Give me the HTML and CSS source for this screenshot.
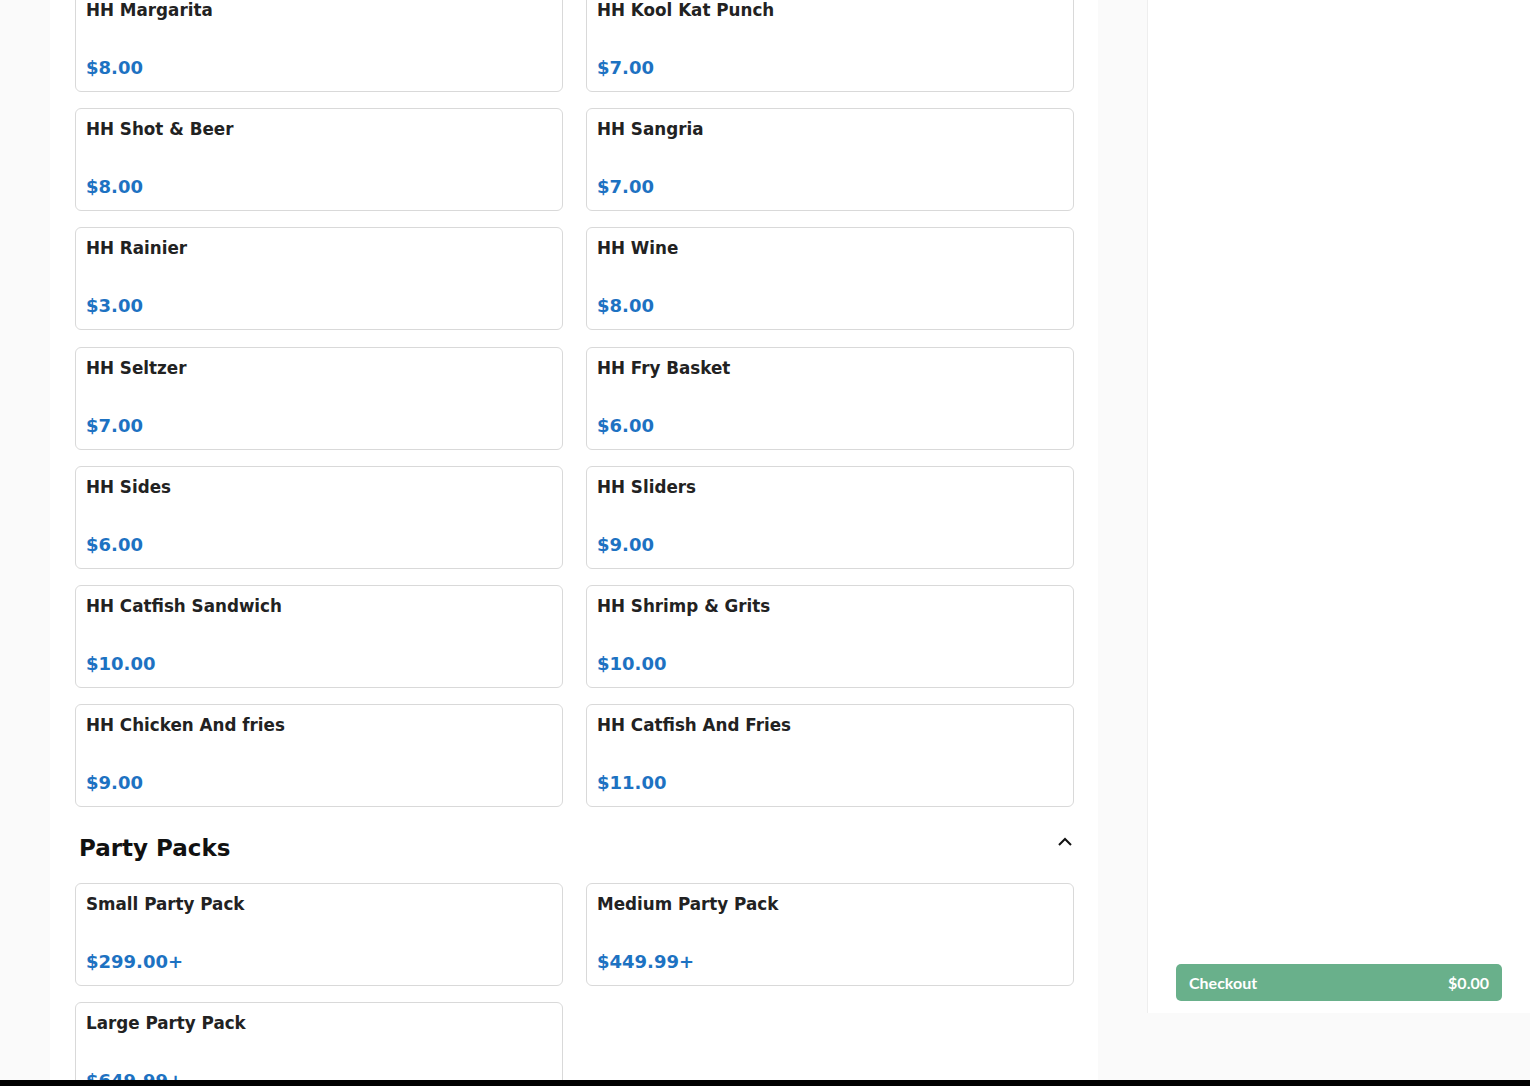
FILE: index.html
```html
<!DOCTYPE html>
<html lang="en">
<head>
<meta charset="utf-8">
<title>Menu</title>
<link rel="stylesheet" href="styles.css">
</head>
<body>
<div class="layout">
  <main class="menu">
    <div class="grid first">
      <div class="card"><div class="name">HH Margarita</div><div class="price">$8.00</div></div>
      <div class="card"><div class="name">HH Kool Kat Punch</div><div class="price">$7.00</div></div>
      <div class="card"><div class="name">HH Shot &amp; Beer</div><div class="price">$8.00</div></div>
      <div class="card"><div class="name">HH Sangria</div><div class="price">$7.00</div></div>
      <div class="card"><div class="name">HH Rainier</div><div class="price">$3.00</div></div>
      <div class="card"><div class="name">HH Wine</div><div class="price">$8.00</div></div>
      <div class="card"><div class="name">HH Seltzer</div><div class="price">$7.00</div></div>
      <div class="card"><div class="name">HH Fry Basket</div><div class="price">$6.00</div></div>
      <div class="card"><div class="name">HH Sides</div><div class="price">$6.00</div></div>
      <div class="card"><div class="name">HH Sliders</div><div class="price">$9.00</div></div>
      <div class="card"><div class="name">HH Catfish Sandwich</div><div class="price">$10.00</div></div>
      <div class="card"><div class="name">HH Shrimp &amp; Grits</div><div class="price">$10.00</div></div>
      <div class="card"><div class="name">HH Chicken And fries</div><div class="price">$9.00</div></div>
      <div class="card"><div class="name">HH Catfish And Fries</div><div class="price">$11.00</div></div>
    </div>
    <div class="section-head">
      <h2>Party Packs</h2>
      <svg class="chevron" width="16" height="10" viewBox="0 0 16 10"><path d="M2 8 L8 2 L14 8" fill="none" stroke="#111" stroke-width="2"/></svg>
    </div>
    <div class="grid">
      <div class="card"><div class="name">Small Party Pack</div><div class="price">$299.00+</div></div>
      <div class="card"><div class="name">Medium Party Pack</div><div class="price">$449.99+</div></div>
      <div class="card"><div class="name">Large Party Pack</div><div class="price">$649.99+</div></div>
    </div>
  </main>
  <aside class="cart">
    <button class="checkout"><span>Checkout</span><span>$0.00</span></button>
  </aside>
</div>
<div class="bottom-bar"></div>
</body>
</html>
```
FILE: styles.css
```css
html, body {
  margin: 0;
  padding: 0;
  height: 1086px;
  overflow: hidden;
  background: #fafafa;
  font-family: "DejaVu Sans", sans-serif;
}

.layout {
  display: flex;
  align-items: flex-start;
  gap: 49px;
  padding-left: 50px;
}

.menu {
  width: 1048px;
  box-sizing: border-box;
  padding: 0 25px;
  background: #fff;
  min-height: 1086px;
}

.grid {
  display: grid;
  grid-template-columns: 487.5px 487.5px;
  column-gap: 23.5px;
  row-gap: 16.2px;
}

.grid.first {
  margin-top: -11px;
}

.card {
  height: 103px;
  box-sizing: border-box;
  border: 1px solid #d9d9d9;
  border-radius: 6px;
  padding: 10px 10px 13px;
  display: flex;
  flex-direction: column;
  justify-content: space-between;
  background: #fff;
}

.name {
  font-size: 16.75px;
  font-weight: bold;
  color: #222;
}

.price {
  font-size: 18px;
  font-weight: bold;
  color: #1d72c2;
}

.section-head {
  display: flex;
  justify-content: space-between;
  align-items: flex-start;
  margin: 28px 0 22px;
  padding: 0 0 0 4px;
}

.section-head h2 {
  margin: 0;
  font-size: 23px;
  font-weight: bold;
  color: #111;
}

.chevron {
  margin-top: 2px;
}

.cart {
  width: 383px;
  height: 1013px;
  box-sizing: border-box;
  background: #fff;
  border-left: 1px solid #eeeeee;
  display: flex;
  flex-direction: column;
  justify-content: flex-end;
  padding: 0 28px 12px 28px;
}

.checkout {
  display: flex;
  justify-content: space-between;
  align-items: center;
  height: 37px;
  width: 100%;
  border: none;
  border-radius: 5px;
  background: #69b08b;
  color: #fff;
  font-family: "Lato", sans-serif;
  font-weight: bold;
  font-size: 16px;
  padding: 0 13px;
}

.bottom-bar {
  position: fixed;
  left: 0;
  right: 0;
  bottom: 0;
  height: 6px;
  background: #000;
}
```
